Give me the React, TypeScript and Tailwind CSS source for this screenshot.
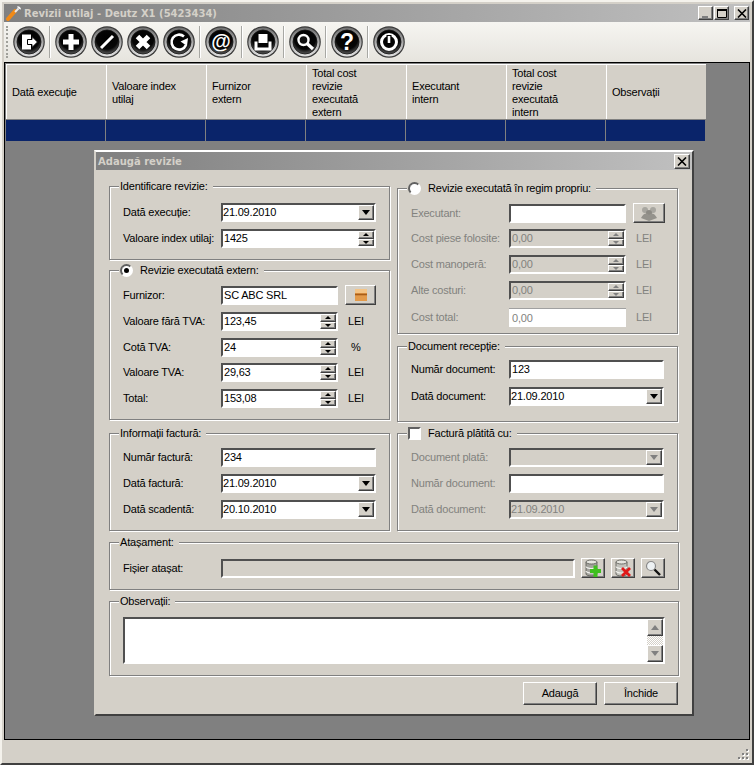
import React from "react";

const raised = "border border-t-white border-l-white border-r-[#404040] border-b-[#404040] bg-[#d4d0c8] shadow-[inset_-1px_-1px_0_#808080]";
const sunken = "border-2 border-t-[#505050] border-l-[#505050] border-r-white border-b-white";

function Tri({ up = false, muted = false, big = false }: { up?: boolean; muted?: boolean; big?: boolean }) {
  const color = muted ? "#808080" : "#000";
  return (
    <svg width={big ? 8 : 6} height={big ? 5 : 3} viewBox="0 0 8 4" preserveAspectRatio="none">
      <path d={up ? "M0 4 L4 0 L8 4Z" : "M0 0 L8 0 L4 4Z"} fill={color} />
    </svg>
  );
}

function SpinButtons({ muted = false }: { muted?: boolean }) {
  return (
    <div className="flex h-full w-[16px] shrink-0 flex-col">
      <div className={`${raised} flex h-1/2 items-center justify-center`}>
        <Tri up muted={muted} />
      </div>
      <div className={`${raised} flex h-1/2 items-center justify-center`}>
        <Tri muted={muted} />
      </div>
    </div>
  );
}

function Field({
  value = "",
  w = 155,
  kind = "text",
  disabled = false,
  ghost = false,
  bare = false,
}: {
  value?: string;
  w?: number;
  kind?: "text" | "combo" | "spin";
  disabled?: boolean;
  ghost?: boolean;
  bare?: boolean;
}) {
  const bg = disabled ? "bg-[#d4d0c8]" : "bg-white";
  return (
    <div
      style={{ width: w }}
      className={`flex h-[19px] shrink-0 items-center ${bare ? "border-t border-t-[#a0a0a0] pl-[3px]" : sunken} ${bg} ${ghost || disabled ? "text-[#82827e]" : "text-black"} ${kind === "combo" ? "pl-0" : "pl-[1px]"}`}
    >
      <span className="flex-1 truncate leading-[15px]">{value}</span>
      {kind === "combo" && (
        <div className={`${raised} flex h-[15px] w-[16px] shrink-0 items-center justify-center`}>
          <Tri big muted={disabled} />
        </div>
      )}
      {kind === "spin" && <SpinButtons muted={disabled} />}
    </div>
  );
}

function Row({
  label,
  muted = false,
  labelW = 98,
  mt = 0,
  children,
}: {
  label: string;
  muted?: boolean;
  labelW?: number;
  mt?: number;
  children: React.ReactNode;
}) {
  return (
    <div className="flex items-center" style={{ marginTop: mt }}>
      <span style={{ width: labelW }} className={`shrink-0 whitespace-nowrap ${muted ? "text-[#82827e]" : "text-black"}`}>
        {label}
      </span>
      {children}
    </div>
  );
}

function Group({
  title,
  h,
  pt,
  lead,
  children,
}: {
  title: string;
  h: number;
  pt: number;
  lead?: React.ReactNode;
  children: React.ReactNode;
}) {
  return (
    <div style={{ height: h }} className="border border-[#808080] shadow-[1px_1px_0_#fff,inset_1px_1px_0_#fff]">
      <div className="-mt-[8px] ml-[9px] flex h-[15px] w-fit items-center gap-[7px] bg-[#d4d0c8] pr-[5px] pl-px text-black">
        {lead}
        <span>{title}</span>
      </div>
      <div className="pl-[13px]" style={{ paddingTop: pt }}>
        {children}
      </div>
    </div>
  );
}

function Radio({ on = false }: { on?: boolean }) {
  return (
    <span className="flex h-[13px] w-[13px] items-center justify-center rounded-full border-2 border-t-[#606060] border-l-[#606060] border-r-white border-b-white bg-white">
      {on && <span className="h-[5px] w-[5px] rounded-full bg-black" />}
    </span>
  );
}

function Unit({ children, muted = false, w = 28 }: { children: React.ReactNode; muted?: boolean; w?: number }) {
  return <span style={{ marginLeft: w - 18 }} className={muted ? "text-[#82827e]" : "text-black"}>{children}</span>;
}

function CaptionBtn({ kind, size = 15 }: { kind: "min" | "max" | "x"; size?: number }) {
  return (
    <div style={{ width: size, height: size - 1 }} className={`${raised} flex items-center justify-center`}>
      <svg width="10" height="9" viewBox="0 0 10 9">
        {kind === "min" && <rect x="1" y="7" width="6" height="2" fill="#808080" />}
        {kind === "max" && <path d="M0.5 1.5H9.5V8.5H0.5Z" fill="none" stroke="#000" strokeWidth="1" />}
        {kind === "max" && <rect x="0" y="0" width="10" height="2" fill="#000" />}
        {kind === "x" && <path d="M1 0.5 L9 8.5 M9 0.5 L1 8.5" stroke="#000" strokeWidth="1.6" />}
      </svg>
    </div>
  );
}

function RoundIcon({ id, children }: { id: string; children: React.ReactNode }) {
  return (
    <svg width="32" height="32" viewBox="0 0 32 32" className="shrink-0">
      <defs>
        <linearGradient id={`${id}r`} x1="0" y1="0" x2="0" y2="1">
          <stop offset="0" stopColor="#6e6e6e" />
          <stop offset="0.5" stopColor="#a8a8a8" />
          <stop offset="1" stopColor="#e2e2e2" />
        </linearGradient>
        <radialGradient id={`${id}d`} cx="0.5" cy="0.35" r="0.72">
          <stop offset="0" stopColor="#000" />
          <stop offset="0.62" stopColor="#060606" />
          <stop offset="1" stopColor="#777" />
        </radialGradient>
      </defs>
      <circle cx="16" cy="16" r="15.8" fill="#3a3a3a" />
      <circle cx="16" cy="16" r="14.6" fill={`url(#${id}r)`} />
      <circle cx="16" cy="16" r="12" fill={`url(#${id}d)`} stroke="#111" strokeWidth="0.8" />
      {children}
    </svg>
  );
}

function Sep() {
  return <div className="mx-[4px] h-[32px] w-[2px] shrink-0 border-l border-r border-l-[#a8a8a4] border-r-white" />;
}

function Grip() {
  return (
    <svg width="12" height="11" viewBox="0 0 12 11">
      {[[9, 0], [9, 4], [5, 4], [9, 8], [5, 8], [1, 8]].map(([x, y], i) => (
        <g key={i}>
          <rect x={x + 1} y={y + 1} width="2" height="2" fill="#fff" />
          <rect x={x} y={y} width="2" height="2" fill="#808080" />
        </g>
      ))}
    </svg>
  );
}

function Db({ minus = false }: { minus?: boolean }) {
  const body = minus ? "#c2c2bc" : "#a2a29c";
  return (
    <g>
      <path d="M3 3V15A5.5 2 0 0 0 14 15V3Z" fill={body} stroke="#55554f" strokeWidth="0.8" />
      <ellipse cx="8.5" cy="3" rx="5.5" ry="2" fill="#e6e6e0" stroke="#55554f" strokeWidth="0.8" />
      <path d="M3 7.5A5.5 2 0 0 0 14 7.5 M3 12A5.5 2 0 0 0 14 12" fill="none" stroke="#f2f2ee" strokeWidth="1.2" />
    </g>
  );
}

const columns: React.ReactNode[] = [
  "Dată execuție",
  <>Valoare index<br />utilaj</>,
  <>Furnizor<br />extern</>,
  <>Total cost<br />revizie<br />executată<br />extern</>,
  <>Executant<br />intern</>,
  <>Total cost<br />revizie<br />executată<br />intern</>,
  "Observații",
];

export default function App() {
  return (
    <div className="flex h-[765px] w-[754px] flex-col overflow-hidden border-2 border-t-[#f4f2ec] border-l-[#f4f2ec] border-r-[#404040] border-b-[#404040] bg-[#d4d0c8] p-[2px] font-[family-name:Liberation_Sans,Arial,sans-serif] text-[11px] tracking-[-0.2px]">
      {/* Title bar */}
      <div className="flex h-[18px] shrink-0 items-center bg-gradient-to-r from-[#808080] to-[#c0c0c0] pr-[1px] pl-[2px]">
        <svg width="16" height="16" viewBox="0 0 16 16" className="shrink-0">
          <path d="M2 14 L9 6" stroke="#f08a18" strokeWidth="4" strokeLinecap="round" />
          <path d="M9 7 L12.5 3.5" stroke="#e8e8e8" strokeWidth="2" />
          <path d="M11 1.5 a3 3 0 0 1 4 3 l-2 -.5 -1.5 -1.5Z" fill="#f4f4f4" />
        </svg>
        <span className="ml-[2px] font-[family-name:DejaVu_Sans,sans-serif] text-[10px] font-bold tracking-normal whitespace-nowrap text-[#d4d0c8]">
          Revizii utilaj - Deutz X1 (5423434)
        </span>
        <div className="ml-auto flex items-center gap-[1px]">
          <CaptionBtn kind="min" />
          <CaptionBtn kind="max" />
          <div className="w-[3px]" />
          <CaptionBtn kind="x" />
        </div>
      </div>

      {/* Toolbar */}
      <div className="flex h-[40px] shrink-0 items-center bg-gradient-to-b from-[#f6f5f1] to-[#e6e4de] pl-[2px]">
        <div className="mr-[5px] h-[32px] w-[2px] shrink-0 border-l-2 border-dotted border-[#a0a09a]" />
        <RoundIcon id="a">
          <path d="M9 8.5H18V23.5H9Z" fill="#fff" />
          <path d="M14.5 13.5H19V10.5L24.5 16L19 21.5V18.5H14.5Z" fill="#fff" stroke="#000" strokeWidth="1" />
        </RoundIcon>
        <Sep />
        <div className="flex gap-[4px]">
          <RoundIcon id="b">
            <path d="M13.5 8H18.5V13.5H24V18.5H18.5V24H13.5V18.5H8V13.5H13.5Z" fill="#fff" />
          </RoundIcon>
          <RoundIcon id="c">
            <path d="M10 22 L22 10" stroke="#fff" strokeWidth="3" />
          </RoundIcon>
          <RoundIcon id="d">
            <path d="M10.5 10.5 L21.5 21.5 M21.5 10.5 L10.5 21.5" stroke="#fff" strokeWidth="5" />
          </RoundIcon>
          <RoundIcon id="e">
            <path d="M21 10.5 A7.5 7.5 0 1 0 23 19" fill="none" stroke="#fff" strokeWidth="2.6" />
            <path d="M25 12 L24 20 L17.5 15.5Z" fill="#fff" />
          </RoundIcon>
        </div>
        <Sep />
        <RoundIcon id="f">
          <text x="16" y="22" textAnchor="middle" fontSize="20" fontWeight="700" fill="#fff" fontFamily="Liberation Sans">@</text>
        </RoundIcon>
        <Sep />
        <RoundIcon id="g">
          <path d="M11.5 8H20.5V17H11.5Z" fill="#fff" />
          <path d="M9 15.5V23H23V15.5" fill="none" stroke="#fff" strokeWidth="3" />
        </RoundIcon>
        <Sep />
        <RoundIcon id="h">
          <circle cx="14.5" cy="14" r="5" fill="#111" stroke="#fff" strokeWidth="2.4" />
          <path d="M18 17.5 L24 23" stroke="#fff" strokeWidth="3.2" />
        </RoundIcon>
        <Sep />
        <RoundIcon id="i">
          <text x="16" y="24" textAnchor="middle" fontSize="23" fontWeight="700" fill="#fff" fontFamily="Liberation Sans">?</text>
        </RoundIcon>
        <Sep />
        <RoundIcon id="j">
          <circle cx="16" cy="16" r="7.5" fill="none" stroke="#fff" strokeWidth="3" />
          <path d="M16 9V18" stroke="#000" strokeWidth="5" />
          <path d="M16 10V17" stroke="#fff" strokeWidth="2.6" />
        </RoundIcon>
      </div>

      {/* Client area */}
      <div className="relative flex-1 border border-black bg-[#808080] pt-px pl-px">
        <div className="grid w-[700px] grid-cols-[100px_100px_100px_100px_100px_100px_100px]">
          {columns.map((c, i) => (
            <div
              key={i}
              className="flex h-[55px] items-center border-t border-l border-t-white border-l-white bg-[#d4d0c8] pt-px pl-[5px] leading-[13px] text-black"
            >
              <div>{c}</div>
            </div>
          ))}
          {columns.map((_, i) => (
            <div key={i} className="h-[22px] border-t border-r border-t-[#808080] border-r-[#808080] bg-[#0a246a]" />
          ))}
        </div>

        {/* Dialog */}
        <div className="absolute top-[87px] left-[89px] flex h-[566px] w-[600px] flex-col border-2 border-t-white border-l-[#d4d0c8] border-r-[#404040] border-b-[#404040] bg-[#d4d0c8]">
          <div className="flex h-[18px] shrink-0 items-center bg-gradient-to-r from-[#808080] to-[#c0c0c0] pr-[2px] pl-[2px]">
            <span className="font-[family-name:DejaVu_Sans,sans-serif] text-[10px] font-bold tracking-normal text-[#d4d0c8]">Adaugă revizie</span>
            <div className="ml-auto">
              <CaptionBtn kind="x" size={16} />
            </div>
          </div>

          <div className="flex flex-1 flex-col px-[13px] pt-[16px]">
            <div className="grid grid-cols-[281px_281px] gap-x-[7px]">
              {/* Left column */}
              <div className="flex flex-col">
                <Group title="Identificare revizie:" h={74} pt={9}>
                  <Row label="Dată execuție:">
                    <Field value="21.09.2010" kind="combo" />
                  </Row>
                  <Row label="Valoare index utilaj:" mt={7}>
                    <Field value="1425" kind="spin" />
                  </Row>
                </Group>
                <div className="mt-[10px]">
                  <Group title="Revizie executată extern:" h={150} pt={7} lead={<Radio on />}>
                    <Row label="Furnizor:">
                      <Field value="SC ABC SRL" w={117} />
                      <div className={`${raised} ml-[7px] flex h-[20px] w-[31px] items-center justify-center`}>
                        <svg width="16" height="14" viewBox="0 0 16 14">
                          <path d="M2 1H14V13H2Z" fill="#e39a4a" />
                          <path d="M2 1H14V5H2Z" fill="#f4c486" />
                          <path d="M2 6.5H14" stroke="#a85d18" strokeWidth="1.6" />
                        </svg>
                      </div>
                    </Row>
                    <Row label="Valoare fără TVA:" mt={7}>
                      <Field value="123,45" w={117} kind="spin" />
                      <Unit>LEI</Unit>
                    </Row>
                    <Row label="Cotă TVA:" mt={7}>
                      <Field value="24" w={117} kind="spin" />
                      <Unit w={31}>%</Unit>
                    </Row>
                    <Row label="Valoare TVA:" mt={6}>
                      <Field value="29,63" w={117} kind="spin" />
                      <Unit>LEI</Unit>
                    </Row>
                    <Row label="Total:" mt={7}>
                      <Field value="153,08" w={117} kind="spin" />
                      <Unit>LEI</Unit>
                    </Row>
                  </Group>
                </div>
                <div className="mt-[13px]">
                  <Group title="Informații factură:" h={98} pt={7}>
                    <Row label="Număr factură:">
                      <Field value="234" />
                    </Row>
                    <Row label="Dată factură:" mt={7}>
                      <Field value="21.09.2010" kind="combo" />
                    </Row>
                    <Row label="Dată scadentă:" mt={7}>
                      <Field value="20.10.2010" kind="combo" />
                    </Row>
                  </Group>
                </div>
              </div>

              {/* Right column */}
              <div className="flex flex-col pt-[2px]">
                <Group title="Revizie executată în regim propriu:" h={146} pt={7} lead={<Radio />}>
                  <Row label="Executant:" muted>
                    <Field w={117} />
                    <div className={`${raised} ml-[7px] flex h-[20px] w-[32px] items-center justify-center`}>
                      <svg width="18" height="15" viewBox="0 0 18 15">
                        <circle cx="5" cy="4" r="3" fill="#a8a6a0" />
                        <circle cx="13" cy="4" r="3" fill="#a8a6a0" />
                        <circle cx="9" cy="7" r="3" fill="#8c8a84" />
                        <path d="M1 12 Q5 5 9 9 Q13 5 17 12 L9 15Z" fill="#94928c" />
                      </svg>
                    </div>
                  </Row>
                  <Row label="Cost piese folosite:" muted mt={6}>
                    <Field value="0,00" w={117} kind="spin" disabled />
                    <Unit muted>LEI</Unit>
                  </Row>
                  <Row label="Cost manoperă:" muted mt={7}>
                    <Field value="0,00" w={117} kind="spin" disabled />
                    <Unit muted>LEI</Unit>
                  </Row>
                  <Row label="Alte costuri:" muted mt={7}>
                    <Field value="0,00" w={117} kind="spin" disabled />
                    <Unit muted>LEI</Unit>
                  </Row>
                  <Row label="Cost total:" muted mt={8}>
                    <Field value="0,00" w={117} ghost bare />
                    <Unit muted>LEI</Unit>
                  </Row>
                </Group>
                <div className="mt-[12px]">
                  <Group title="Document recepție:" h={76} pt={6}>
                    <Row label="Număr document:">
                      <Field value="123" />
                    </Row>
                    <Row label="Dată document:" mt={8}>
                      <Field value="21.09.2010" kind="combo" />
                    </Row>
                  </Group>
                </div>
                <div className="mt-[11px]">
                  <Group
                    title="Factură plătită cu:"
                    h={98}
                    pt={7}
                    lead={<span className="h-[13px] w-[13px] border-2 border-t-[#606060] border-l-[#606060] border-r-white border-b-white bg-white" />}
                  >
                    <Row label="Document plată:" muted>
                      <Field kind="combo" disabled />
                    </Row>
                    <Row label="Număr document:" muted mt={7}>
                      <Field />
                    </Row>
                    <Row label="Dată document:" muted mt={7}>
                      <Field value="21.09.2010" kind="combo" disabled />
                    </Row>
                  </Group>
                </div>
              </div>
            </div>

            <div className="mt-[11px]">
              <Group title="Atașament:" h={48} pt={8}>
                <Row label="Fișier atașat:">
                  <Field w={354} disabled />
                  <div className="ml-[6px] flex gap-[6px]">
                    <div className={`${raised} flex h-[20px] w-[24px] items-center justify-center`}>
                      <svg width="20" height="18" viewBox="0 0 20 18">
                        <Db />
                        <path d="M10.5 6.5H14.5V10H18V14H14.5V18H10.5V14H7V10H10.5Z" fill="#3fc01f" />
                      </svg>
                    </div>
                    <div className={`${raised} flex h-[20px] w-[24px] items-center justify-center`}>
                      <svg width="20" height="18" viewBox="0 0 20 18">
                        <Db minus />
                        <path d="M9 9 L17 17 M17 9 L9 17" stroke="#e01818" strokeWidth="2.8" />
                      </svg>
                    </div>
                    <div className={`${raised} flex h-[20px] w-[24px] items-center justify-center`}>
                      <svg width="18" height="16" viewBox="0 0 18 16">
                        <circle cx="7" cy="6" r="4.5" fill="#eef2f4" stroke="#8a8a8a" strokeWidth="1.2" />
                        <path d="M10.5 9.5 L16 15" stroke="#111" strokeWidth="2.4" />
                      </svg>
                    </div>
                  </div>
                </Row>
              </Group>
            </div>

            <div className="mt-[11px]">
              <Group title="Observații:" h={75} pt={8}>
                <div className={`${sunken} flex h-[47px] w-[542px] justify-end bg-white`}>
                  <div className="flex h-full w-[16px] flex-col bg-[#e8e6e0] bg-[repeating-conic-gradient(#d4d0c8_0_25%,#fff_0_50%)] bg-[length:2px_2px]">
                    <div className={`${raised} flex h-[17px] items-center justify-center`}>
                      <Tri up big muted />
                    </div>
                    <div className="flex-1" />
                    <div className={`${raised} flex h-[17px] items-center justify-center`}>
                      <Tri big muted />
                    </div>
                  </div>
                </div>
              </Group>
            </div>

            <div className="mt-[6px] flex justify-end gap-[7px] pr-[1px]">
              <div className={`${raised} flex h-[23px] w-[74px] items-center justify-center text-black`}>Adaugă</div>
              <div className={`${raised} flex h-[23px] w-[74px] items-center justify-center text-black`}>Închide</div>
            </div>
          </div>
        </div>
      </div>

      {/* Status bar */}
      <div className="flex h-[21px] shrink-0 items-end justify-end pr-[1px] pb-[1px]">
        <Grip />
      </div>
    </div>
  );
}
